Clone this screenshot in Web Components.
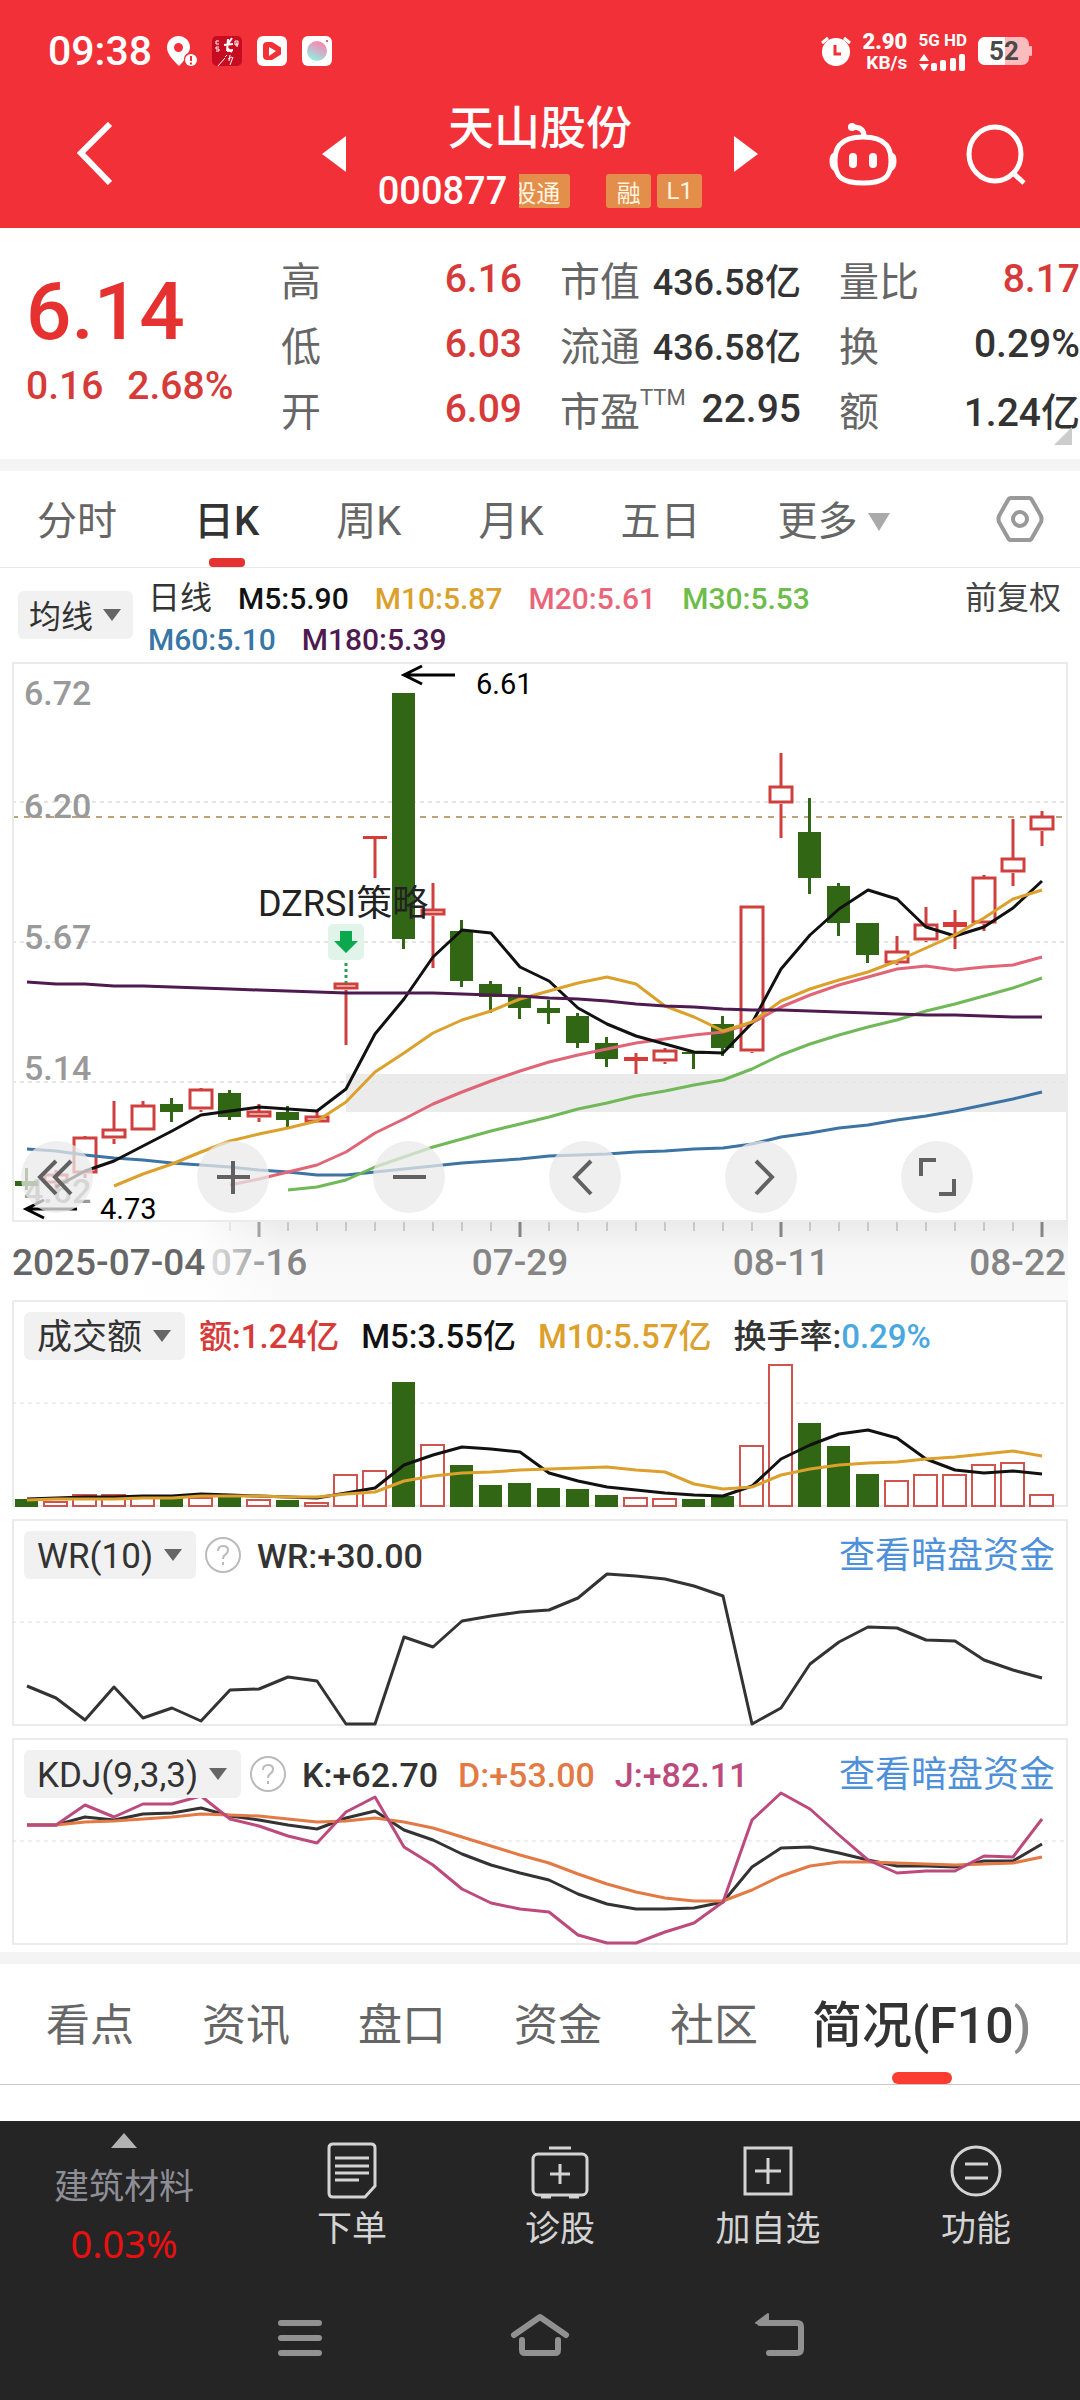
<!DOCTYPE html>
<html lang="zh-CN">
<head>
<meta charset="utf-8">
<meta name="viewport" content="width=device-width, initial-scale=1">
<title>天山股份 000877</title>
<style>
  :root {
    --brand: #f13037;
    --up: #d63b39;
    --text: #333;
    --muted: #666;
    --font: Roboto, "Noto Sans CJK SC", sans-serif;
  }
  body {
    margin: 0;
    background: #fff;
    color: var(--text);
    font-family: var(--font);
  }
</style>
</head>
<body>
<stock-page></stock-page>

<script>
/* Shared by every element: box sizing and bare controls */
const BASE = `
  *, *::before, *::after { box-sizing: border-box; }
  button, select { appearance: none; border: 0; margin: 0; padding: 0; background: none; color: inherit; font: inherit; }
  a { color: inherit; text-decoration: none; }
  svg { display: block; flex: none; }
`;

function define(name, css, html) {
  customElements.define(name, class extends HTMLElement {
    constructor() {
      super();
      this.attachShadow({ mode: 'open' });
      this.shadowRoot.innerHTML = `<style>${BASE}${css}</style>${typeof html === 'function' ? html(this) : html}`;
    }
  });
}

/* ---------- status bar ---------- */

define('status-bar', `
  :host { display: flex; justify-content: space-between; align-items: center; height: 102px; padding: 0 48px; color: #fff; }
  .side { display: flex; align-items: center; }
  .left { gap: 15px; }
  .right { gap: 11px; }
  time { font-size: 41px; font-weight: 500; line-height: 48px; }
  .stack { display: flex; flex-direction: column; align-items: flex-end; font-weight: 700; font-size: 19px; line-height: 19px; }
  .stack b { font-size: 22px; line-height: 23px; }
  .cell { gap: 4px; font-size: 17px; align-items: stretch; }
  .battery text { font: 700 26px Roboto, sans-serif; }
`, `
  <div class="side left">
    <time>09:38</time>
    <svg width="30" height="30" viewBox="0 0 30 30" fill="#fff">
      <path fill-rule="evenodd" d="M11.500 0A11.500 11.500 0 0 0 0 11.500C0 18 6 24 12 30C14 28 16 26 17 24A7 7 0 0 1 21 17C22.500 15 23 13 23 11.500A11.500 11.500 0 0 0 11.500 0ZM11.500 7A4.500 4.500 0 1 1 11.500 16A4.500 4.500 0 0 1 11.500 7Z"/>
      <circle cx="24" cy="24" r="6"/>
      <path d="M24 20v5M24 26.500v2" stroke="#f13037" stroke-width="2"/>
    </svg>
    <svg width="30" height="30" viewBox="0 0 30 30" fill="none" stroke="#fff">
      <rect width="30" height="30" rx="5" fill="#c50c20" stroke="none"/>
      <path d="M7 5h-3v3h3M7 11h-3v2h3v2h-3" stroke-width="1"/>
      <path d="M16 3l-1 12M20 2l-4 6M12 9l9-1M15 15l6-1M15 12l5 4" stroke-width="2"/>
      <path d="M13 22l-7 8M15 19l-2 2M18 19l-1 6M21 21l-3 8M16 23l4-2" stroke-width="1"/>
      <path d="M23 5h3v4h-3zM24 7h1v4" stroke-width="1"/>
    </svg>
    <svg width="30" height="30" viewBox="0 0 30 30">
      <rect width="30" height="30" rx="6" fill="#fff"/>
      <path d="M10 7h5l8 5v6l-8 5h-5q-3 0-3-3v-10q0-3 3-3z" fill="#f13037" stroke="#f13037" stroke-width="2" stroke-linejoin="round"/>
      <path d="M12 11l7 4l-7 5z" fill="#fff"/>
    </svg>
    <svg width="30" height="30" viewBox="0 0 30 30">
      <defs><linearGradient id="lens" x1="0.7" y1="0.1" x2="0.300" y2="0.900"><stop offset="0" stop-color="#f48bb0"/><stop offset="0.500" stop-color="#c9b5cc"/><stop offset="1" stop-color="#92ecdd"/></linearGradient></defs>
      <rect width="30" height="30" rx="6" fill="#fff"/>
      <circle cx="15" cy="15" r="10" fill="url(#lens)"/>
      <circle cx="25" cy="5" r="1" fill="#a44"/>
    </svg>
  </div>
  <div class="side right">
    <svg width="30" height="30" viewBox="0 0 30 30">
      <circle cx="15" cy="16" r="14" fill="#fff"/>
      <path d="M1 7l6-5M29 7l-6-5" stroke="#fff" stroke-width="3"/>
      <path d="M14 9v9h6" fill="none" stroke="#f13037" stroke-width="3"/>
    </svg>
    <div class="stack"><b>2.90</b><span>KB/s</span></div>
    <div class="stack cell">
      <span>5G HD</span>
      <svg width="48" height="18" viewBox="0 0 48 18" fill="#fff">
        <path d="M6 0l5 7h-10zM6 17l5-7h-10z"/>
        <rect x="13" y="9" width="6" height="8" rx="2"/><rect x="22" y="6" width="6" height="11" rx="2"/>
        <rect x="32" y="4" width="6" height="13" rx="2"/><rect x="41" y="0" width="6" height="17" rx="2"/>
      </svg>
    </div>
    <svg class="battery" width="54" height="28" viewBox="0 0 54 28">
      <rect width="51" height="28" rx="7" fill="#fbbcbe"/>
      <rect x="51" y="9" width="3" height="10" rx="1" fill="#fbbcbe"/>
      <path d="M7 0h20v28h-20a7 7 0 0 1-7-7v-14a7 7 0 0 1 7-7z" fill="#fff"/>
      <text x="26" y="23" text-anchor="middle" fill="#4a4a4a">52</text>
    </svg>
  </div>
`);

/* ---------- title bar with stock name ---------- */

define('stock-header', `
  :host { display: grid; grid-template-columns: 1fr auto 1fr; grid-template-rows: 104px; align-items: center; height: 126px; padding: 0 54px 22px 77px; color: #fff; }
  .center { display: flex; align-items: center; gap: 32px; margin-right: 23px; }
  .name { display: flex; flex-direction: column; align-items: center; padding-top: 12px; }
  h1 { margin: 0; font-size: 46px; font-weight: 500; line-height: 62px; }
  .code { display: flex; align-items: center; height: 64px; font-size: 38px; font-weight: 500; }
  .tag { display: flex; justify-content: center; align-items: center; width: 45px; height: 34px; margin-left: 6px; border-radius: 3px; background: #e38f4b; color: #fff4e0; font-size: 24px; font-weight: 400; }
  .clip { width: 51px; margin: 0 30px 0 12px; padding-right: 10px; justify-content: flex-end; overflow: hidden; white-space: nowrap; border-radius: 0 3px 3px 0; }
  .tools { display: flex; justify-content: flex-end; gap: 68px; }
`, `
  <button aria-label="返回"><svg width="36" height="64" viewBox="0 0 36 64" fill="none" stroke="#fff" stroke-width="6"><path d="M33 2L4 31L33 61"/></svg></button>
  <div class="center">
    <button aria-label="上一只"><svg width="24" height="36" viewBox="0 0 24 36" fill="#fff"><path d="M0 18L24 0V36z"/></svg></button>
    <div class="name">
      <h1>天山股份</h1>
      <div class="code"><span>000877</span><span class="tag clip">股通</span><span class="tag">融</span><span class="tag">L1</span></div>
    </div>
    <button aria-label="下一只"><svg width="24" height="36" viewBox="0 0 24 36" fill="#fff"><path d="M24 18L0 0V36z"/></svg></button>
  </div>
  <div class="tools">
    <button aria-label="智能助手">
      <svg width="70" height="64" viewBox="0 0 70 64" fill="none" stroke="#fff" stroke-width="5">
        <path d="M35 15C60 15 63 28 63 39C63 55 56 61 35 61C14 61 7 55 7 39C7 28 10 15 35 15Z"/>
        <path d="M36 14C36 8 32 5 25 5"/><circle cx="24" cy="5" r="4" fill="#fff" stroke="none"/>
        <path d="M6 31q-4 1-4 8q0 8 5 10zM64 31q4 1 4 8q0 8-5 10z" fill="#fff" stroke-width="1"/>
        <path d="M25 35v7M45 35v7" stroke-width="8" stroke-linecap="round"/>
      </svg>
    </button>
    <button aria-label="搜索">
      <svg width="60" height="64" viewBox="0 0 60 64" fill="none" stroke="#fff" stroke-width="5"><ellipse cx="29" cy="32" rx="26" ry="27"/><path d="M47 51L58 61"/></svg>
    </button>
  </div>
`);

/* ---------- quote board ---------- */

define('quote-item', `
  :host { display: flex; justify-content: space-between; align-items: center; height: 65px; font-size: 39px; font-weight: 500; color: var(--text); white-space: nowrap; }
  :host([up]) { color: var(--up); }
  :host([small]) { font-size: 36px; }
  .label { display: flex; font-size: 40px; font-weight: 400; color: var(--muted); }
  sup { margin-top: 6px; font-size: 22px; line-height: 24px; }
`, el => `
  <span class="label">${el.getAttribute('label')}${el.hasAttribute('note') ? `<sup>${el.getAttribute('note')}</sup>` : ''}</span>
  <span><slot></slot></span>
`);

define('quote-board', `
  :host { display: grid; grid-template-columns: minmax(0, 217fr) repeat(3, minmax(0, 241fr)); gap: 38px; height: 231px; padding: 18px 0 18px 26px; position: relative; }
  .last { padding-top: 20px; color: var(--up); font-weight: 500; white-space: nowrap; }
  .price { font-size: 80px; line-height: 92px; color: #e63131; }
  .change { display: flex; gap: 24px; font-size: 39px; line-height: 56px; }
  .more { position: absolute; right: 8px; bottom: 14px; }
`, `
  <div class="last">
    <div class="price">6.14</div>
    <div class="change"><span>0.16</span><span>2.68%</span></div>
  </div>
  <div>
    <quote-item label="高" up>6.16</quote-item>
    <quote-item label="低" up>6.03</quote-item>
    <quote-item label="开" up>6.09</quote-item>
  </div>
  <div>
    <quote-item label="市值" small>436.58亿</quote-item>
    <quote-item label="流通" small>436.58亿</quote-item>
    <quote-item label="市盈" note="TTM">22.95</quote-item>
  </div>
  <div>
    <quote-item label="量比" up>8.17</quote-item>
    <quote-item label="换">0.29%</quote-item>
    <quote-item label="额">1.24亿</quote-item>
  </div>
  <svg class="more" width="18" height="18" viewBox="0 0 18 18"><path d="M18 0V18H0z" fill="#ccc"/></svg>
`);

/* ---------- drop-down: a real select with its own caret ---------- */

define('drop-down', `
  :host { display: inline-grid; align-items: center; border-radius: 6px; color: var(--text); }
  :host([chip]) { height: 48px; background: #f1f1f1; font-size: var(--size, 35px); }
  select { grid-area: 1 / 1; padding: 0 32px 0 0; line-height: 48px; }
  :host([chip]) select { height: 48px; padding: 2px var(--end, 42px) 0 var(--start, 13px); }
  svg { grid-area: 1 / 1; justify-self: end; pointer-events: none; }
  :host([chip]) svg { margin-right: var(--caret, 14px); }
`, el => `
  <select aria-label="${el.getAttribute('label')}"><option>${el.getAttribute('value')}</option></select>
  ${el.hasAttribute('chip')
    ? '<svg width="18" height="12" viewBox="0 0 18 12"><path d="M0 0H18L9 12z" fill="#666"/></svg>'
    : '<svg width="22" height="18" viewBox="0 0 22 18"><path d="M0 0H22L11 18z" fill="#aaa"/></svg>'}
`);

/* ---------- period tabs ---------- */

define('period-tabs', `
  :host { display: flex; align-items: center; gap: 77px; height: 97px; padding: 0 36px 0 37px; border-bottom: 1px solid #e6e6e6; color: var(--muted); font-size: 40px; }
  button { display: flex; flex-direction: column; align-items: center; height: 96px; padding-top: 22px; line-height: 58px; }
  button[aria-selected=true] { color: var(--text); font-weight: 500; }
  button[aria-selected=true]::after { content: ""; width: 36px; height: 9px; margin-top: 7px; border-radius: 4px; background: #e63131; }
  drop-down { margin-top: 5px; color: var(--muted); }
  .setup { margin-left: auto; padding: 0; justify-content: center; }
`, `
  <button role="tab" aria-selected="false">分时</button>
  <button role="tab" aria-selected="true">日K</button>
  <button role="tab" aria-selected="false">周K</button>
  <button role="tab" aria-selected="false">月K</button>
  <button role="tab" aria-selected="false">五日</button>
  <drop-down label="更多周期" value="更多"></drop-down>
  <button class="setup" aria-label="图表设置">
    <svg width="48" height="48" viewBox="0 0 48 48" fill="none" stroke="#999" stroke-width="4"><path d="M15 3H33Q35 3 36 5L45 21Q46 24 45 27L36 43Q35 45 33 45H15Q13 45 12 43L3 27Q2 24 3 21L12 5Q13 3 15 3Z"/><circle cx="24" cy="24" r="7"/></svg>
  </button>
`);

/* ---------- charts ---------- */

const WIDTH = 1056;
const STEP = 29;
const x = i => 15 + i * STEP;

// [kind, high, top, bottom, low] in plot units from the top edge
const CANDLES = [
  ['d', 506, 519, 524, 528], ['u', 508, 512, 522, 526], ['u', 474, 475, 512, 516], ['u', 439, 467, 477, 482],
  ['u', 439, 443, 469, 469], ['d', 436, 442, 450, 460], ['u', 426, 427, 448, 450], ['d', 428, 431, 455, 458],
  ['u', 442, 449, 456, 460], ['d', 444, 450, 458, 466], ['u', 449, 454, 461, 461], ['u', 321, 321, 328, 383],
  ['u', 174, 174, 177, 216], ['d', 31, 31, 277, 287], ['u', 221, 247, 254, 306], ['d', 258, 269, 319, 325],
  ['d', 319, 322, 335, 351], ['d', 325, 335, 346, 357], ['d', 338, 346, 351, 362], ['d', 351, 354, 381, 386],
  ['d', 375, 381, 397, 405], ['u', 391, 395, 399, 412], ['u', 386, 388, 400, 402], ['d', 390, 390, 392, 407],
  ['d', 354, 362, 386, 394], ['u', 244, 244, 390, 391], ['u', 91, 124, 142, 176], ['d', 136, 170, 216, 232],
  ['d', 221, 224, 261, 274], ['d', 261, 261, 293, 301], ['u', 274, 289, 302, 303], ['u', 245, 262, 279, 280],
  ['u', 248, 260, 265, 287], ['u', 213, 215, 262, 269], ['u', 157, 196, 211, 224], ['u', 149, 154, 169, 184]
];

const AVERAGES = [
  { from: 0, color: '#3d74a3', y: [487, 489, 493, 496, 498, 501, 503, 505, 508, 510, 513, 513, 510, 507, 504, 501, 499, 497, 494, 493, 492, 490, 489, 487, 486, 482, 475, 471, 466, 463, 458, 454, 449, 443, 437, 430] },
  { from: 9, color: '#71b859', y: [528, 525, 518, 505, 495, 485, 477, 469, 462, 455, 447, 441, 434, 429, 423, 418, 407, 393, 382, 373, 365, 358, 349, 342, 334, 326, 316] },
  { from: 7, color: '#e06576', y: [523, 517, 510, 503, 490, 471, 457, 442, 430, 419, 409, 400, 393, 387, 381, 377, 373, 370, 361, 345, 333, 323, 315, 307, 304, 308, 305, 303, 295] },
  { from: 1, color: '#111', y: [525, 509, 499, 484, 469, 453, 449, 445, 447, 449, 427, 372, 337, 295, 268, 271, 305, 319, 346, 362, 374, 382, 390, 391, 361, 307, 273, 247, 228, 237, 265, 274, 265, 246, 219] },
  { from: 3, color: '#dca02c', y: [524, 512, 502, 490, 479, 472, 466, 459, 440, 410, 391, 371, 358, 349, 337, 329, 321, 315, 322, 344, 355, 369, 360, 339, 327, 318, 310, 299, 286, 273, 256, 237, 228] },
  { from: 0, color: '#4f1a50', y: [320, 322, 322, 324, 324, 325, 326, 327, 328, 329, 330, 331, 331, 331, 331, 332, 333, 334, 336, 337, 339, 342, 344, 345, 347, 348, 348, 349, 350, 351, 352, 353, 353, 354, 355, 355] }
];

const VOLUMES = [8, 6, 13, 13, 10, 9, 10, 10, 8, 7, 5, 33, 37, 125, 63, 42, 22, 24, 19, 18, 12, 10, 9, 8, 11, 62, 143, 84, 61, 33, 27, 33, 33, 43, 45, 13];

const INDICATORS = {
  volume: [
    { color: '#111', y: [199, 198, 197, 197, 196, 196, 194, 195, 196, 197, 198, 193, 188, 165, 155, 147, 149, 152, 173, 181, 187, 190, 193, 195, 196, 186, 159, 145, 134, 130, 138, 159, 170, 173, 171, 174] },
    { color: '#dca02c', y: [200, 199, 199, 199, 198, 198, 196, 196, 196, 197, 197, 194, 192, 181, 176, 173, 172, 170, 169, 168, 167, 170, 172, 184, 189, 187, 175, 169, 165, 163, 162, 159, 157, 154, 151, 156] }
  ],
  wr: [
    { color: '#333', y: [167, 179, 201, 168, 199, 189, 202, 171, 170, 158, 162, 205, 205, 118, 128, 102, 97, 93, 91, 79, 55, 57, 60, 67, 77, 205, 189, 145, 123, 108, 109, 121, 122, 141, 151, 159] }
  ],
  kdj: [
    { color: '#333', y: [87, 87, 79, 82, 76, 75, 70, 78, 82, 87, 91, 80, 73, 92, 102, 116, 127, 135, 142, 156, 166, 171, 171, 170, 164, 129, 110, 109, 115, 122, 128, 128, 129, 123, 123, 106] },
    { color: '#e37945', y: [87, 87, 84, 83, 81, 79, 76, 77, 78, 81, 84, 83, 80, 84, 90, 99, 108, 117, 125, 136, 146, 154, 160, 163, 163, 152, 138, 128, 124, 124, 125, 126, 127, 126, 125, 119] },
    { color: '#bd4a7c', y: [87, 87, 67, 79, 66, 66, 58, 81, 88, 98, 105, 74, 59, 109, 127, 151, 165, 171, 174, 197, 205, 205, 194, 185, 164, 82, 55, 71, 97, 122, 135, 133, 133, 118, 119, 81] }
  ]
};

const polyline = ({ from = 0, color, y }) =>
  `<polyline fill="none" stroke="${color}" stroke-width="3" stroke-linejoin="round" points="${y.map((v, i) => `${x(from + i)},${v}`).join(' ')}"/>`;

function candle([kind, high, top, bottom, low], i) {
  const cx = x(i);
  if (kind === 'd') {
    return `<g fill="#316615"><rect x="${cx - 2}" y="${high}" width="3" height="${low - high}"/><rect x="${cx - 12}" y="${top}" width="23" height="${bottom - top}"/></g>`;
  }
  const body = bottom - top < 6
    ? `<rect x="${cx - 12}" y="${top}" width="24" height="${bottom - top}" fill="#d63b39"/>`
    : `<rect x="${cx - 11}" y="${top + 1}" width="22" height="${bottom - top - 3}" fill="none" stroke="#cf3f3d" stroke-width="3"/>`;
  return `<g><path d="M${cx} ${high}V${top}M${cx} ${bottom}V${low}" stroke="#cf3f3d" stroke-width="3"/>${body}</g>`;
}

const grid = y => `<path d="M0 ${y}H${WIDTH}" stroke="#e6e6e6" stroke-width="2" stroke-dasharray="4 4"/>`;
const pointer = (px, py) => `<path d="M${px + 18} ${py - 9}L${px} ${py}L${px + 18} ${py + 9}M${px} ${py}H${px + 51}" fill="none" stroke="#000" stroke-width="3"/>`;

define('kline-chart', `
  :host { display: block; padding: 0 12px; }
  .plot { position: relative; }
  svg.view { width: 100%; height: auto; overflow: visible; }
  .scale text { font: 500 34px Roboto, sans-serif; fill: #999; }
  .mark text { font: 400 29px Roboto, sans-serif; }
  .signal { font: 400 36px Roboto, "Noto Sans CJK SC", sans-serif; fill: #222; }
  .dates text { font: 500 37px Roboto, sans-serif; fill: #858585; }
  .dates .first { fill: #666; }
  nav { position: absolute; left: 0; right: 0; bottom: 9px; display: grid; grid-template-columns: repeat(6, 1fr); padding-left: 9px; margin-right: -9px; }
  nav button { display: grid; place-items: center; width: 72px; height: 72px; border-radius: 50%; background: rgba(233, 233, 233, 0.75); }
`, () => `
  <div class="plot">
    <svg class="view" viewBox="0 0 ${WIDTH} 560" role="img" aria-label="日K线图">
      <rect x="334" y="412" width="721" height="38" fill="#ebebeb"/>
      ${[140, 280, 420].map(grid).join('')}
      <path d="M0 155H${WIDTH}" stroke="#bfa27c" stroke-width="2" stroke-dasharray="6 6"/>
      <g class="scale">
        <text x="12" y="43">6.72</text><text x="12" y="156">6.20</text><text x="12" y="287">5.67</text><text x="12" y="418">5.14</text><text x="12" y="541">4.62</text>
      </g>
      ${CANDLES.map(candle).join('')}
      <rect x="316" y="262" width="36" height="36" rx="5" fill="#e0f4ea"/>
      <path d="M328 269h12v10h6l-12 12l-12-12h6z" fill="#0ba84d"/>
      <path d="M334 301V321" stroke="#2a9d58" stroke-width="3" stroke-dasharray="3 3"/>
      ${AVERAGES.map(polyline).join('')}
      <text class="signal" x="246" y="254">DZRSI策略</text>
      <g class="mark">${pointer(392, 13)}<text x="464" y="32">6.61</text>${pointer(14, 547)}<text x="88" y="557">4.73</text></g>
      <rect x="1" y="1" width="${WIDTH - 2}" height="558" fill="none" stroke="#ebebeb" stroke-width="2"/>
    </svg>
    <nav>
      ${[
        ['快速后退', 'M23 8L7 24L23 41M38 8L22 24L38 41'],
        ['放大', 'M24 8V41M8 24H41'],
        ['缩小', 'M8 24H41'],
        ['左移', 'M30 8L14 24L30 41'],
        ['右移', 'M19 8L35 24L19 41'],
        ['全屏', 'M23 7H8V23M41 26V41H26']
      ].map(([name, d]) => `<button aria-label="${name}"><svg width="48" height="48" viewBox="0 0 48 48" fill="none" stroke="#616161" stroke-width="4"><path d="${d}"/></svg></button>`).join('')}
    </nav>
  </div>
  <svg class="view dates" viewBox="0 0 ${WIDTH} 78">
    <defs>
      <linearGradient id="drop" x1="0" y1="0" x2="0" y2="1"><stop offset="0" stop-color="#ebebeb"/><stop offset="0.400" stop-color="#f7f7f7"/><stop offset="1" stop-color="#fafafa"/></linearGradient>
      <linearGradient id="fade"><stop offset="0" stop-color="#fff"/><stop offset="0.680" stop-color="#fff" stop-opacity="0.9"/><stop offset="1" stop-color="#fff" stop-opacity="0"/></linearGradient>
    </defs>
    <rect width="${WIDTH}" height="78" fill="url(#drop)"/>
    ${CANDLES.map((c, i) => i < 7 ? '' : i % 9 === 8
      ? `<path d="M${x(i)} 0V15" stroke="#858585" stroke-width="3"/>`
      : `<path d="M${x(i)} 0V9" stroke="#c8c8c8" stroke-width="2"/>`).join('')}
    <g text-anchor="middle"><text x="247" y="53">07-16</text><text x="508" y="53">07-29</text><text x="769" y="53">08-11</text></g>
    <text x="1054" y="53" text-anchor="end">08-22</text>
    <rect width="270" height="78" fill="url(#fade)"/>
    <text class="first" x="0" y="53">2025-07-04</text>
  </svg>
`);

define('chart-legend', `
  :host { display: flex; align-items: flex-start; height: 94px; padding: 10px 19px 0 18px; font-size: 30px; line-height: 41px; }
  drop-down { --size: 32px; --start: 11px; --end: 39px; --caret: 12px; margin: 13px 15px 0 0; }
  ul { display: flex; flex-wrap: wrap; flex: 1; gap: 0 26px; max-width: 720px; margin: 0; padding: 0; list-style: none; font-weight: 500; }
  li:first-child, .adjust { font-size: 32px; font-weight: 400; }
  .adjust { margin-left: auto; color: #444; line-height: 41px; }
`, `
  <drop-down chip label="主图指标" value="均线"></drop-down>
  <ul>
    <li>日线</li>
    <li style="color:#111">M5:5.90</li>
    <li style="color:#dca02c">M10:5.87</li>
    <li style="color:#e9667a">M20:5.61</li>
    <li style="color:#6cbd4a">M30:5.53</li>
    <li style="color:#3876a8">M60:5.10</li>
    <li style="color:#4f1a50">M180:5.39</li>
  </ul>
  <button class="adjust">前复权</button>
`);

/* Indicator panel: header sits in the same grid cell as its chart */
define('indicator-panel', `
  :host { display: grid; }
  .view, header { grid-area: 1 / 1; }
  .view { width: 100%; height: auto; }
  header { display: flex; align-items: center; align-self: start; padding: 12px 13px 0 12px; z-index: 1; }
  .help { margin-left: 9px; }
  .values { display: flex; gap: 20px; margin-left: 16px; padding-top: 2px; font-size: 34px; font-weight: 500; line-height: 46px; white-space: nowrap; }
  :host([type=volume]) .values { gap: 22px; margin-left: 14px; font-size: 33px; }
  .dark { margin-left: auto; padding-top: 2px; color: #4e90d9; font-size: 36px; line-height: 46px; }
`, el => {
  const type = el.getAttribute('type');
  const bars = type !== 'volume' ? '' : VOLUMES.map((h, i) => CANDLES[i][0] === 'd'
    ? `<rect x="${x(i) - 12}" y="${207 - h}" width="23" height="${h}" fill="#316615"/>`
    : `<rect x="${x(i) - 12}" y="${208 - h}" width="23" height="${h - 2}" fill="#fff" stroke="#cf5450" stroke-width="2"/>`).join('');
  return `
    <svg class="view" viewBox="0 0 ${WIDTH} 207" role="img" aria-label="${el.getAttribute('name')}">
      <rect x="1" y="1" width="${WIDTH - 2}" height="205" fill="none" stroke="#ebebeb" stroke-width="2"/>
      <path d="M0 103H${WIDTH}" stroke="#dedede" stroke-dasharray="4 4"/>
      ${bars}${INDICATORS[type].map(polyline).join('')}
    </svg>
    <header>
      <drop-down chip label="副图指标" value="${el.getAttribute('name')}"></drop-down>
      ${el.hasAttribute('help') ? `<button class="help" aria-label="指标说明"><svg width="36" height="36" viewBox="0 0 36 36"><circle cx="18" cy="18" r="17" fill="none" stroke="#bbb" stroke-width="2"/><path d="M13 14Q13 9 18 9Q23 9 23 13Q23 16 20 18Q18 19 18 22M18 25V28" fill="none" stroke="#bbb" stroke-width="2"/></svg></button>` : ''}
      <div class="values"><slot></slot></div>
      ${el.hasAttribute('help') ? '<a class="dark" href="#funds">查看暗盘资金</a>' : ''}
    </header>`;
});

/* ---------- section tabs ---------- */

define('section-tabs', `
  :host { display: flex; height: 121px; padding: 0 12px; border-bottom: 1px solid #c8c8c8; color: var(--muted); font-size: 44px; }
  button { display: flex; flex-direction: column; align-items: center; padding: 32px 34px 0; line-height: 60px; white-space: nowrap; }
  button[aria-selected=true] { padding-left: 20px; color: var(--text); font-size: 50px; font-weight: 500; }
  button[aria-selected=true]::after { content: ""; width: 60px; height: 12px; margin-top: 16px; border-radius: 6px; background: #fb3c30; }
  .fade { color: #888; }
`, `
  <button role="tab" aria-selected="false">看点</button>
  <button role="tab" aria-selected="false">资讯</button>
  <button role="tab" aria-selected="false">盘口</button>
  <button role="tab" aria-selected="false">资金</button>
  <button role="tab" aria-selected="false">社区</button>
  <button role="tab" aria-selected="true"><span>简况(F10<span class="fade">)</span></span></button>
`);

/* ---------- bottom bars ---------- */

define('trade-item', `
  :host { display: block; }
  button { display: flex; flex-direction: column; align-items: center; width: 100%; padding-top: 20px; color: #d4d4d4; font-size: 35px; line-height: 50px; }
  svg { margin-bottom: 4px; fill: none; stroke: #d4d4d4; stroke-width: 3; }
`, el => `
  <button><svg width="60" height="60" viewBox="0 0 60 60">${{
    order: '<path d="M11 3H49Q53 3 53 7V45L43 56H11Q7 56 7 52V7Q7 3 11 3ZM13 17H47M13 25H47M13 32H47M13 39H37"/>',
    check: '<rect x="3" y="13" width="54" height="41" rx="5"/><path d="M19 7H41M30 23V43M20 33H40M11 56H21M39 56H49"/>',
    add: '<rect x="7" y="7" width="46" height="46"/><path d="M30 17V43M17 30H43"/>',
    menu: '<circle cx="30" cy="30" r="24"/><path d="M19 23H42M19 37H42"/>'
  }[el.getAttribute('icon')]}</svg><slot></slot></button>
`);

define('trade-bar', `
  :host { display: grid; grid-template-columns: minmax(0, 248fr) repeat(4, minmax(0, 208fr)); height: 169px; background: #252525; }
  .sector { display: flex; flex-direction: column; align-items: center; padding-top: 12px; color: #8e8e96; font-size: 35px; line-height: 56px; white-space: nowrap; }
  .sector b { color: #e81010; font: 400 38px/54px "Noto Sans", sans-serif; }
  .sector svg { margin-bottom: 12px; }
`, `
  <a class="sector" href="#sector">
    <svg width="26" height="15" viewBox="0 0 26 15"><path d="M13 0L26 15H0z" fill="#b3b3b3"/></svg>
    <span>建筑材料</span><b>0.03%</b>
  </a>
  <trade-item icon="order">下单</trade-item>
  <trade-item icon="check">诊股</trade-item>
  <trade-item icon="add">加自选</trade-item>
  <trade-item icon="menu">功能</trade-item>
`);

define('system-nav', `
  :host { display: flex; justify-content: center; gap: 180px; height: 110px; padding-top: 8px; background: #252525; }
  button { height: 70px; }
  svg { fill: none; stroke: #919191; stroke-width: 6; stroke-linecap: round; stroke-linejoin: round; }
`, `
  <button aria-label="最近任务"><svg width="60" height="60" viewBox="0 0 60 60"><path d="M11 20H49M11 35H49M11 50H49"/></svg></button>
  <button aria-label="主屏幕"><svg width="60" height="60" viewBox="0 0 60 60"><path d="M4 32L30 14L56 32M12 37V47Q12 50 15 50H45Q48 50 48 47V37"/></svg></button>
  <button aria-label="返回"><svg width="60" height="60" viewBox="0 0 60 60"><path d="M10 20H47Q51 20 51 24V46Q51 50 47 50H19"/><path d="M6 20L18 11V20z" fill="#919191" stroke-width="2"/></svg></button>
`);

/* ---------- page ---------- */

define('stock-page', `
  :host { display: flex; flex-direction: column; min-height: 100vh; }
  .top { background: var(--brand); }
  hr { width: 100%; height: 12px; margin: 0; border: 0; background: #f4f4f4; }
  .panels { display: grid; gap: 12px; padding: 0 12px 7px; }
  .rest { flex: 1; }
`, `
  <div class="top">
    <status-bar></status-bar>
    <stock-header></stock-header>
  </div>
  <quote-board></quote-board>
  <hr>
  <period-tabs></period-tabs>
  <chart-legend></chart-legend>
  <kline-chart></kline-chart>
  <div class="panels">
    <indicator-panel type="volume" name="成交额">
      <span style="color:#d63b39">额:1.24亿</span>
      <span style="color:#111">M5:3.55亿</span>
      <span style="color:#dca02c">M10:5.57亿</span>
      <span>换手率:<span style="color:#4aa8e0">0.29%</span></span>
    </indicator-panel>
    <indicator-panel type="wr" name="WR(10)" help>
      <span>WR:+30.00</span>
    </indicator-panel>
    <indicator-panel type="kdj" name="KDJ(9,3,3)" help>
      <span>K:+62.70</span>
      <span style="color:#e37945">D:+53.00</span>
      <span style="color:#bd4a7c">J:+82.11</span>
    </indicator-panel>
  </div>
  <hr>
  <section-tabs></section-tabs>
  <div class="rest"></div>
  <trade-bar></trade-bar>
  <system-nav></system-nav>
`);
</script>
</body>
</html>
